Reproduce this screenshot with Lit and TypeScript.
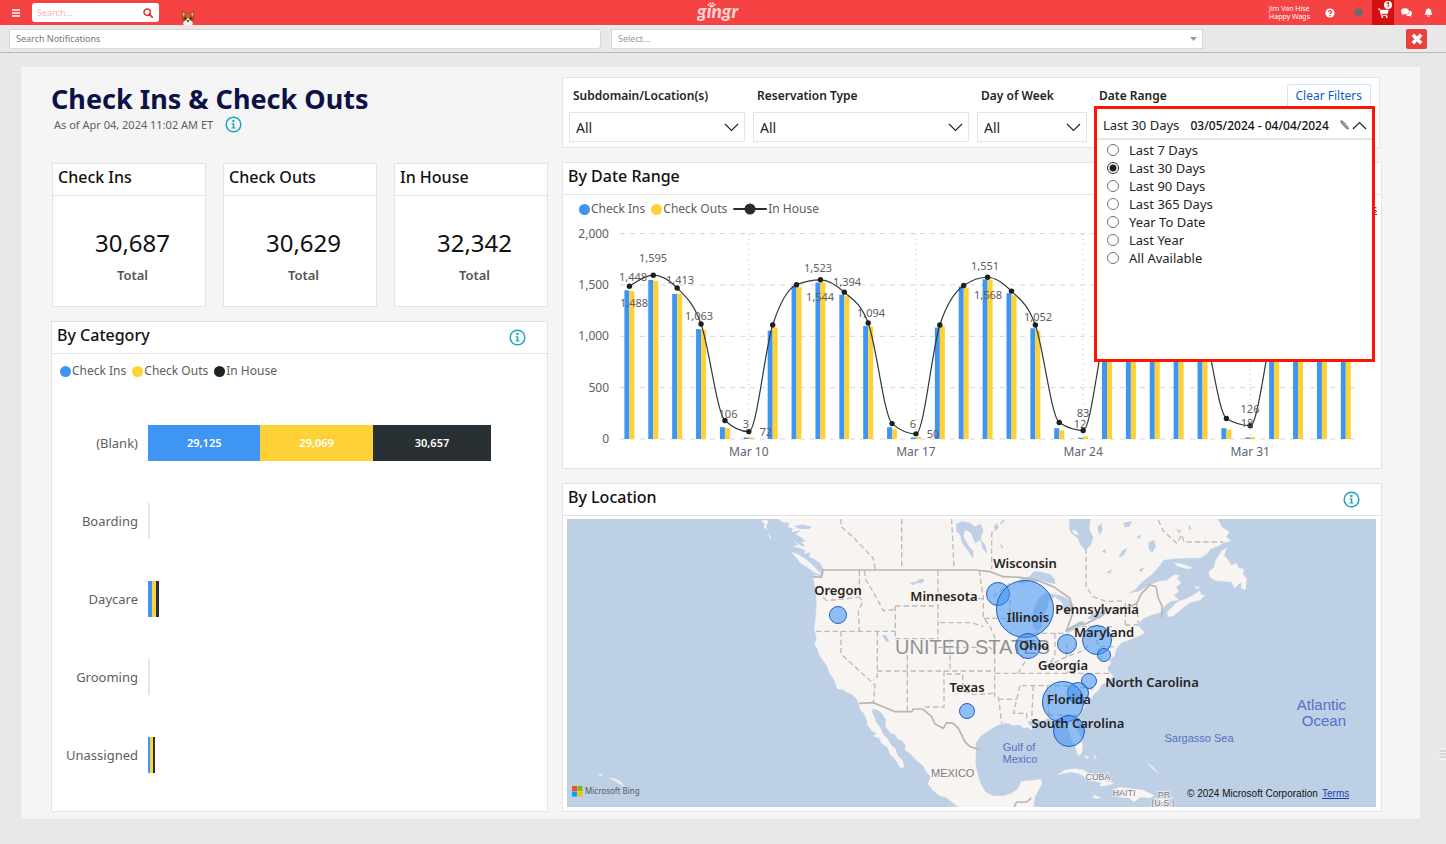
import { LitElement, html, svg, css } from "lit";
import { customElement, property, state } from "lit/decorators.js";

type Day = [number, number, number];

const DAYS: Day[] = [
  [1448, 1440, 1488], [1549, 1540, 1595], [1413, 1413, 1470], [1070, 1063, 1120],
  [115, 106, 180], [15, 17, 72], [1055, 1085, 1110], [1490, 1480, 1502],
  [1523, 1530, 1550], [1405, 1394, 1430], [1100, 1094, 1130], [115, 95, 150],
  [15, 20, 50], [1085, 1100, 1110], [1485, 1475, 1495], [1555, 1551, 1575],
  [1420, 1400, 1440], [1078, 1055, 1110], [105, 85, 160], [12, 25, 83],
  [1090, 1100, 1130], [1480, 1470, 1500], [1540, 1530, 1560], [1410, 1400, 1430],
  [1080, 1070, 1120], [105, 90, 200], [15, 18, 130], [1060, 1070, 1120],
  [1470, 1460, 1490], [1500, 1490, 1520], [1400, 1390, 1420],
];

const POINT_LABELS: [string, number, number][] = [
  ["1,448", 633, 281], ["1,595", 653, 262], ["1,413", 680, 284], ["1,488", 634, 307],
  ["1,063", 699, 320], ["106", 728, 418], ["3", 746, 428], ["72", 766, 436],
  ["1,523", 818, 272], ["1,544", 820, 301], ["1,394", 847, 286], ["1,094", 871, 317],
  ["6", 913, 428], ["50", 933, 438], ["1,551", 985, 270], ["1,568", 988, 299],
  ["1,052", 1038, 321], ["83", 1083, 417], ["12", 1080, 428], ["126", 1250, 413],
  ["18", 1247, 427],
];

const CATEGORIES: { name: string; values: number[] }[] = [
  { name: "(Blank)", values: [29125, 29069, 30657] },
  { name: "Boarding", values: [] },
  { name: "Daycare", values: [1000, 1000, 950] },
  { name: "Grooming", values: [] },
  { name: "Unassigned", values: [620, 620, 620] },
];
const CATEGORY_MAX = 103300;

const BUBBLES: [number, number, number][] = [
  [998, 594, 11], [1025, 609, 28], [1028, 646, 12], [1067, 644, 9], [1097, 640, 14],
  [1104, 655, 6], [1089, 681, 7], [1078, 693, 10], [1063, 702, 20], [1069, 731, 15],
  [838, 615, 8], [967, 711, 7],
];

const PLACES: [string, number, number][] = [
  ["Wisconsin", 1025, 568], ["Oregon", 838, 595], ["Minnesota", 944, 601],
  ["Illinois", 1028, 622], ["Pennsylvania", 1097, 614], ["Maryland", 1104, 637],
  ["Ohio", 1034, 650], ["Georgia", 1063, 670], ["Texas", 967, 692],
  ["North Carolina", 1152, 687], ["Florida", 1069, 704], ["South Carolina", 1078, 728],
];

const RANGES = ["Last 7 Days", "Last 30 Days", "Last 90 Days", "Last 365 Days", "Year To Date", "Last Year", "All Available"];

const FONT = css`"Noto Sans", "Open Sans", sans-serif`;

const xAt = (i: number) => 629.4 + i * 23.88;
const yAt = (v: number) => 439 - v * 0.1027;

/** Monotone cubic through the in-house points, so the curve never overshoots a day. */
function curve(points: [number, number][]): string {
  const n = points.length;
  const slope: number[] = [];
  for (let i = 0; i < n - 1; i++) {
    slope.push((points[i + 1][1] - points[i][1]) / (points[i + 1][0] - points[i][0]));
  }
  const tangent = points.map((_, i) => {
    if (i === 0) return slope[0] * 1.3;
    if (i === n - 1) return slope[n - 2];
    const a = slope[i - 1];
    const b = slope[i];
    if (a * b <= 0) return 0;
    return Math.sign(a) * Math.min(Math.abs(a), Math.abs(b), Math.abs(a + b) / 4) * 2;
  });
  let d = `M${points[0][0]},${points[0][1]}`;
  for (let i = 0; i < n - 1; i++) {
    const [x0, y0] = points[i];
    const [x1, y1] = points[i + 1];
    const h = (x1 - x0) / 3;
    d += `C${x0 + h},${y0 + tangent[i] * h} ${x1 - h},${y1 - tangent[i + 1] * h} ${x1},${y1}`;
  }
  return d;
}

@customElement("info-button")
class InfoButton extends LitElement {
  static styles = css`
    :host { display: inline-flex; }
    .info { display: flex; padding: 0; border: 0; background: none; }
  `;
  render() {
    return html`<button class="info" aria-label="Information">
      <svg width="17" height="17" viewBox="0 0 17 17">
        <circle cx="8.500" cy="8.500" r="7.300" fill="none" stroke="#1fa3bf" stroke-width="1.500" />
        <circle cx="8.400" cy="5" r="1.200" fill="#1fa3bf" />
        <path d="M6.500 7.200H9.300V11.400H10.600V12.500H6.400V11.400H7.700V8.300H6.500Z" fill="#1fa3bf" />
      </svg>
    </button>`;
  }
}

@customElement("chart-legend")
class ChartLegend extends LitElement {
  @property({ type: Boolean }) line = false;
  static styles = css`
    :host { display: block; }
    .legend { display: flex; gap: 6px; align-items: center; font: 12px/16px ${FONT}; color: #605e5c; }
    .item { display: flex; align-items: center; gap: 1px; }
    .dot { width: 11px; height: 11px; border-radius: 50%; }
    .ins { background: #3f95f4; }
    .outs { background: #fed236; }
    .house { background: #1d2426; }
  `;
  render() {
    return html`<div class="legend">
      <span class="item"><span class="dot ins"></span>Check Ins</span>
      <span class="item"><span class="dot outs"></span>Check Outs</span>
      <span class="item">${this.line
        ? html`<svg width="34" height="12" viewBox="0 0 34 12"><path d="M1 6H33" stroke="#262d30" stroke-width="2" stroke-linecap="round" /><circle cx="17" cy="6" r="5.500" fill="#262d30" /></svg>`
        : html`<span class="dot house"></span>`}In House</span>
    </div>`;
  }
}

@customElement("trend-chart")
class TrendChart extends LitElement {
  static styles = css`
    :host { display: block; }
    .chart { display: block; width: 100%; height: auto; font-family: ${FONT}; }
    .axis { font-size: 12px; fill: #605e5c; }
    .day { font-size: 12px; fill: #5b6570; text-anchor: middle; }
    .end { text-anchor: end; }
    .value { font-size: 11px; fill: #605e5c; text-anchor: middle; }
  `;
  render() {
    const points = DAYS.map(([, , h], i) => [xAt(i), yAt(h)] as [number, number]);
    return html`<svg class="chart" viewBox="562 224 820 244" role="img" aria-label="Check ins, check outs and in house by day">
      ${[0, 500, 1000, 1500, 2000].map(
        (v) => svg`<path d="M620,${yAt(v)}H1356" stroke="#d2d6da" stroke-width="1" stroke-dasharray="5 5" />
          <text class="axis end" x="609" y=${yAt(v) + 4}>${v.toLocaleString("en-US")}</text>`
      )}
      ${[5, 12, 19, 26].map(
        (i, k) => svg`<path d="M${xAt(i)},234V439" stroke="#bcc0c2" stroke-width="1" stroke-dasharray="1 4" />
          <text class="day" x=${xAt(i)} y="456">Mar ${10 + 7 * k}</text>`
      )}
      ${DAYS.map(
        ([a, b], i) => svg`<rect x=${xAt(i) - 5} y=${yAt(a)} width="5" height=${439 - yAt(a)} fill="#3f95f4" />
          <rect x=${xAt(i)} y=${yAt(b)} width="5" height=${439 - yAt(b)} fill="#fed236" />`
      )}
      <path d=${curve(points)} fill="none" stroke="#30383a" stroke-width="1.200" />
      ${points.map(([x, y]) => svg`<circle cx=${x} cy=${y} r="2.700" fill="#1a2022" />`)}
      ${POINT_LABELS.map(([t, x, y]) => svg`<text class="value" x=${x} y=${y}>${t}</text>`)}
    </svg>`;
  }
}

@customElement("location-map")
class LocationMap extends LitElement {
  static styles = css`
    :host { display: block; }
    .map { display: block; width: 100%; height: auto; font-family: ${FONT}; }
    .land { fill: #f8f4f2; stroke: #f8f4f2; stroke-width: 1; stroke-linejoin: round; }
    .lake { fill: #bdd0e5; }
    .state { fill: none; stroke: #bfbab8; stroke-width: 4; stroke-dasharray: 16 9; }
    .border { fill: none; stroke: #bab4b3; stroke-width: 5; }
    .sans { font-family: "Liberation Sans", sans-serif; }
    .country { font-size: 20px; fill: #929292; }
    .region { font-size: 11px; fill: #7c7c7c; }
    .small { font-size: 9px; fill: #7c7c7c; text-anchor: middle; }
    .sea { font-size: 11px; fill: #566fc4; text-anchor: middle; }
    .ocean { font-size: 15px; fill: #566fc4; text-anchor: end; }
    .bubble { fill: #3b8ff5; fill-opacity: 0.55; stroke: #1b62c4; stroke-width: 1; }
    .place { font-size: 13px; font-weight: 600; fill: #252423; text-anchor: middle; }
    .halo { paint-order: stroke; stroke: #f8f4f2; stroke-opacity: 0.7; stroke-width: 2px; }
    .bing { font-size: 8px; fill: #555a5e; }
    .notice { font-size: 10px; fill: #111; }
    .terms { font-size: 10px; fill: #1f3fa8; text-decoration: underline; }
  `;
  render() {
    return html`<svg class="map" viewBox="567 519 809 288" role="img" aria-label="Check ins by location">
      <rect x="567" y="519" width="809" height="288" fill="#bdd0e5" />
      <g transform="translate(560 480) scale(0.33333)">
        <path class="land" d="M655,117 668,126 690,128 684,140 700,146 692,158 712,164 722,176 702,184 716,194 700,200 722,204 738,212 732,222 752,216 748,230 762,236 782,250 790,266 792,280 784,292 772,286 758,288 764,312 768,340 770,375 766,425 763,440 766,460 770,475 764,492 774,510 778,525 790,542 800,556 810,582 822,598 832,627 848,628 860,636 874,642 888,654 896,670 902,690 912,700 922,724 922,734 936,752 950,762 940,768 958,774 964,788 984,804 990,822 1006,838 1022,864 1033,860 1026,840 1014,828 1006,806 990,792 984,778 970,764 960,742 948,726 942,708 934,694 938,686 954,690 968,702 978,720 976,738 990,758 1006,764 1012,776 1028,784 1038,798 1034,808 1052,822 1070,842 1090,858 1100,876 1112,890 1104,912 1122,934 1140,948 1158,952 1176,966 1196,982 1420,982 1424,952 1434,932 1446,912 1443,898 1412,902 1384,904 1376,924 1356,940 1330,948 1300,948 1276,936 1262,912 1252,880 1246,850 1248,812 1246,792 1260,770 1282,754 1308,738 1330,730 1346,730 1360,736 1380,734 1390,744 1404,742 1412,750 1422,742 1406,734 1402,724 1430,720 1450,722 1464,714 1484,718 1500,728 1514,736 1528,750 1534,776 1546,800 1554,826 1564,822 1568,800 1562,772 1550,746 1548,722 1560,700 1576,680 1590,660 1602,642 1614,632 1624,614 1642,606 1660,588 1646,576 1642,562 1654,548 1646,540 1664,528 1668,508 1684,488 1708,480 1740,466 1754,458 1742,446 1734,432 1748,416 1776,404 1802,396 1816,376 1832,364 1856,360 1842,346 1856,334 1848,322 1864,308 1852,298 1858,286 1842,284 1820,302 1800,304 1770,314 1738,334 1700,342 1726,328 1746,306 1776,282 1798,258 1810,240 1840,236 1880,234 1920,234 1940,222 1952,206 1974,198 1990,188 2012,182 1998,170 2008,156 1986,142 1976,122 1970,117Z" />
        <path class="land" d="M1825,410 1822,396 1838,380 1852,366 1880,356 1902,344 1920,332 1922,344 1934,346 1920,360 1890,368 1870,382 1852,398 1838,408Z" />
        <path class="land" d="M1950,292 1946,276 1962,262 1968,240 1986,212 2000,204 1992,226 2004,240 2014,256 2030,250 2036,264 2052,268 2048,282 2060,296 2056,330 2044,324 2044,306 2024,324 2014,306 1990,304 1968,302Z" />
        <path class="land" d="M694,216 712,222 740,240 764,262 786,284 768,280 742,262 722,250 712,236Z" />
        <path class="land" d="M604,122 620,120 626,128 618,134 620,148 612,142 614,132ZM626,160 634,176 630,176Z" />
        <path class="land" d="M1492,884 1516,870 1546,866 1570,870 1590,882 1620,892 1662,910 1636,918 1618,918 1624,908 1588,900 1560,882 1534,876 1516,880Z" />
        <path class="land" d="M1662,928 1680,922 1716,926 1748,930 1782,946 1770,954 1740,952 1722,966 1708,954 1668,950 1692,946 1686,934ZM1794,956 1826,956 1822,966 1796,966ZM1600,946 1622,952 1612,956 1598,952Z" />
        <path class="land" d="M1842,248 1866,252 1900,264 1880,266 1852,258ZM1902,318 1920,322 1912,328ZM1762,850 1774,858 1796,878 1780,868ZM1572,826 1588,832 1580,836ZM1602,824 1610,838 1604,836Z" />
        <path class="land" d="M114,884 126,882 124,888ZM146,894 162,896 180,904 196,922 184,914 168,904Z" />

        <path class="lake" d="M1528,117H1592L1588,148 1600,172 1592,196 1576,210 1562,196 1552,174 1536,162 1528,150Z" />
        <path class="land" d="M1536,150 1548,152 1556,164 1544,162Z" />
        <path class="lake" d="M1370,306 1386,296 1410,288 1422,274 1444,276 1470,282 1484,298 1486,312 1466,308 1440,300 1424,308 1404,304 1388,312Z" />
        <path class="lake" d="M1420,446 1416,416 1424,378 1436,356 1456,338 1500,346 1532,360 1542,378 1530,396 1512,392 1506,366 1484,350 1466,362 1462,384 1448,412 1446,440 1434,452Z" />
        <path class="lake" d="M1514,452 1532,440 1560,424 1574,424 1570,436 1544,450 1520,460ZM1582,414 1600,400 1636,390 1640,400 1616,416 1588,418Z" />
        <path class="lake" d="M1188,132 1206,124 1230,128 1244,140 1262,132 1270,150 1262,176 1276,196 1282,222 1268,206 1262,180 1246,190 1232,158 1216,150 1210,168 1226,198 1240,214 1240,236 1226,216 1206,188 1200,164 1190,156Z" />
        <path class="lake" d="M1048,308 1068,306 1078,298 1094,298 1086,310 1070,310 1060,316ZM966,464 978,466 988,484 978,486Z" />
        <path class="lake" d="M676,150 700,156 722,150 706,164 724,172 738,186 724,184 736,202 720,196 704,182 688,168ZM700,138 728,134 756,140 746,148 720,146Z" />
        <path class="lake" d="M1676,232 1686,212 1702,204 1694,222 1682,232ZM1736,270 1752,262 1746,276ZM1766,186 1782,180 1788,200 1776,218 1766,206ZM1612,142 1624,130 1628,150 1618,166ZM1690,128 1716,124 1708,140 1694,142ZM1640,276 1656,268 1650,282ZM1626,216 1634,206 1640,220ZM1730,170 1742,164 1740,178ZM1850,146 1866,154 1856,160ZM1888,134 1896,150 1884,146ZM1320,190 1330,200 1324,206ZM1300,140 1310,128 1314,150ZM1420,260 1436,256 1430,268Z" />

        <path class="state" d="M843,117V140L880,172 940,235 945,268M1025,117V268M1175,117 1182,268M898,272V352L908,365 895,395 898,452M913,272 918,300 945,345 970,392 1006,388M1006,378V476M1006,378H1134M1134,272V476M790,352 800,362 895,352M768,454H1006M843,454V522L945,615 940,668M952,454V590L940,600M952,573H1305M1006,476H1134M1042,476V692M1140,428H1236L1270,440M1134,502H1290L1305,520M1170,476V573M1152,573V681H1088M1160,582H1208V630L1240,644 1305,640" />
        <path class="state" d="M1332,120 1295,160V268M1578,205V320L1600,350 1640,365 1696,362M1258,272 1268,345M1230,356H1268M1270,345V412L1290,440 1304,470V650M1272,415H1420M1305,580H1650M1315,658H1370M1315,650 1325,730M1385,617H1520L1600,628M1420,617 1415,720M1462,617 1466,718M1466,705H1550M1380,617 1360,700H1400V720M1374,580 1395,545 1370,500M1485,460V530L1460,560M1420,460H1520M1565,440H1665M1460,560 1520,530 1570,512 1590,490M1696,370V430L1700,445M1730,370 1735,430M1695,435H1745M1795,120 1808,150 1850,190 1866,165 1872,186H1990M1520,617 1560,660 1578,678M1620,500H1664M1520,530V490M1560,540 1520,580M1610,480 1625,540M1350,360V410M1300,350 1350,310" />
        <path class="border" d="M757,290 785,292 788,270H1245L1290,275 1330,290 1380,292 1430,300 1480,320 1530,355 1538,400 1520,450 1560,430 1575,433 1630,405 1636,386 1700,385 1730,370 1745,340 1770,315 1788,320 1795,355 1807,380 1805,415" />
        <path class="border" d="M897,670 940,668 1005,695H1055L1060,687H1088L1115,710 1125,732 1150,745 1160,728 1180,730 1195,745 1215,785 1230,800 1258,808M1362,982 1370,966H1400L1414,954" />
      </g>
      <text class="sans country halo" x="895" y="654">UNITED STATES</text>
      <text class="sans region halo" x="931" y="777">MEXICO</text>
      <text class="sans small halo" x="1098" y="780">CUBA</text>
      <text class="sans small halo" x="1124" y="796">HAITI</text>
      <text class="sans small halo" x="1164" y="798">PR</text>
      <text class="sans small halo" x="1163" y="806">(U.S.)</text>
      <text class="sans sea" x="1019" y="751">Gulf of</text>
      <text class="sans sea" x="1020" y="763">Mexico</text>
      <text class="sans sea" x="1199" y="742">Sargasso Sea</text>
      <text class="sans ocean" x="1346" y="710">Atlantic</text>
      <text class="sans ocean" x="1346" y="726">Ocean</text>
      ${BUBBLES.map(([x, y, r]) => svg`<circle class="bubble" cx=${x} cy=${y} r=${r + 0.5} />`)}
      ${PLACES.map(([t, x, y]) => svg`<text class="place" x=${x} y=${y}>${t}</text>`)}
      <rect x="572" y="786" width="5" height="5" fill="#f25022" /><rect x="577.500" y="786" width="5" height="5" fill="#7fba00" />
      <rect x="572" y="791.500" width="5" height="5" fill="#00a4ef" /><rect x="577.500" y="791.500" width="5" height="5" fill="#ffb900" />
      <text class="bing" x="585" y="794">Microsoft Bing</text>
      <text class="sans notice" x="1187" y="797">© 2024 Microsoft Corporation</text>
      <a href="#terms"><text class="sans terms" x="1322" y="797">Terms</text></a>
    </svg>`;
  }
}

@customElement("app-root")
class AppRoot extends LitElement {
  @state() private range = "Last 30 Days";

  static styles = css`
    :host { display: flex; flex-direction: column; min-height: 100vh; background: #e8e8e8; color: #252423; font: 12px/16px ${FONT}; }
    * { box-sizing: border-box; }
    button, input, select { font-family: inherit; margin: 0; }
    button { padding: 0; border: 0; background: none; }
    h1, h2, p, fieldset { margin: 0; padding: 0; border: 0; }

    .topbar { display: grid; grid-template-columns: 1fr auto 1fr; align-items: center; height: 25px; padding-right: 8px; background: #f54343; color: #fff; }
    .left { display: flex; align-items: center; height: 25px; }
    .menu { display: flex; justify-content: center; width: 32px; }
    .search { display: flex; align-items: center; width: 127px; height: 19px; padding: 0 6px 0 5px; border-radius: 3px; background: #fff; }
    .search-input { flex: 1; min-width: 0; border: 0; padding: 0; outline: 0; background: none; font-size: 9px; }
    .search-input::placeholder { color: #f6b3b3; }
    .mascot { align-self: flex-end; margin-left: 21px; }
    .brand { display: flex; }
    .brand-text { font: italic 900 19px/20px Lato, sans-serif; fill: #fdd3d3; }
    .right { display: flex; justify-content: flex-end; align-items: center; height: 25px; }
    .account { margin-right: 6px; font-size: 7px; line-height: 8px; }
    .icon { display: flex; justify-content: center; align-items: center; width: 28px; height: 25px; }
    .chat { width: 24px; }
    .bell { width: 20px; }
    .cart { position: relative; width: 22px; background: #d31111; }
    .badge { position: absolute; top: 1px; right: 2px; width: 8px; height: 8px; border-radius: 50%; background: #fff; color: #c11; font-size: 7px; line-height: 8px; font-weight: 700; }

    .subbar { display: grid; grid-template-columns: 592fr 592fr 214fr; gap: 10px; align-items: center; height: 28px; padding: 0 19px 0 9px; border-bottom: 1px solid #b9b9b9; }
    .notify { height: 20px; border: 1px solid #d9d9d9; border-radius: 3px; padding: 0 6px; font-size: 9px; color: #777; background: #fff; }
    .notify::placeholder { color: #777; }
    .pick { display: grid; align-items: center; }
    .pick-select { grid-area: 1 / 1; width: 100%; height: 20px; appearance: none; border: 1px solid #d9d9d9; padding: 0 6px; font-size: 9px; color: #999; background: #fff; }
    .pick-arrow { grid-area: 1 / 1; justify-self: end; margin-right: 6px; pointer-events: none; }
    .close { display: flex; justify-self: end; align-items: center; justify-content: center; width: 21px; height: 20px; border-radius: 2px; background: #e9413e; }

    .stage { position: relative; flex: 1; padding: 14px 26px 25px 21px; }
    .report { display: grid; grid-template-columns: 497fr 820fr; gap: 14px; padding: 10px 38px 7px 30px; background: #f5f5f5; }
    .column { display: flex; flex-direction: column; min-width: 0; gap: 14px; }
    .intro { height: 72px; padding-top: 5px; }
    .title { font-size: 27px; line-height: 34px; font-weight: 700; color: #0c1245; }
    .asof { display: flex; align-items: center; gap: 12px; padding-left: 3px; font-size: 11px; line-height: 16px; color: #605e5c; }

    .panel { background: #fff; border: 1px solid #e4e4e4; }
    .grow { flex: 1; }
    .head { display: flex; justify-content: space-between; align-items: center; height: 32px; padding: 0 21px 5px 5px; border-bottom: 1px solid #e4e4e4; }
    .heading { font-size: 16px; line-height: 22px; font-weight: 500; color: #111; }
    .head-info { padding-top: 4px; }

    .stats { display: grid; grid-template-columns: repeat(3, 1fr); gap: 17px; padding-left: 1px; }
    .stat { height: 144px; text-align: center; }
    .stat-body { padding: 31px 0 0 7px; }
    .number { font-size: 24px; line-height: 32px; color: #111; }
    .total { padding-top: 7px; font-size: 13px; line-height: 18px; font-weight: 600; color: #555; }

    .category-legend { padding: 9px 8px 0; }
    .rows { padding-top: 25px; }
    .row { display: grid; grid-template-columns: 86px 1fr; gap: 10px; align-items: center; height: 78px; font-size: 13px; color: #605e5c; }
    .row-name { text-align: right; }
    .track { display: flex; height: 36px; }
    .empty { width: 2px; background: #e6e6e6; }
    .seg { display: flex; align-items: center; justify-content: center; overflow: hidden; color: #fff; font-size: 11px; font-weight: 600; }
    .seg-0 { background: #3f95f4; }
    .seg-1 { background: #fed236; }
    .seg-2 { background: #293033; }

    .filters { position: relative; display: grid; grid-template-columns: 176fr 216fr 110fr 276fr; gap: 8px; height: 71px; padding: 6px 8px 0 6px; margin-right: 2px; }
    .filter { display: flex; flex-direction: column; gap: 4px; }
    .filter-label { padding-left: 4px; font-size: 12px; line-height: 24px; font-weight: 600; color: #252423; }
    .drop { display: grid; align-items: center; }
    .drop-select { grid-area: 1 / 1; width: 100%; height: 30px; padding: 0 6px; appearance: none; border: 1px solid #e6e6e6; border-radius: 0; background: #fff; font-size: 14px; color: #252423; }
    .drop-arrow { grid-area: 1 / 1; justify-self: end; margin-right: 6px; pointer-events: none; }
    .date-head { display: flex; justify-content: space-between; height: 24px; }
    .clear { height: 24px; padding: 0 8px; border: 1px solid #cfe5fa; border-radius: 2px; background: #fff; font-size: 12px; line-height: 22px; color: #0f5bc4; }

    .popup { position: absolute; z-index: 2; top: 28px; right: 4px; width: 281px; height: 256px; border: 3px solid #fb1505; background: #fff; }
    .current { display: flex; align-items: center; justify-content: space-between; width: 100%; height: 31px; padding: 3px 5px 0 6px; border-bottom: 2px solid #e4e4e4; font-size: 13px; color: #252423; }
    .span { font-size: 12px; font-weight: 500; color: #111; }
    .tools { display: flex; align-items: center; gap: 3px; }
    .options { display: flex; flex-direction: column; padding: 1px 0 0 10px; }
    .option { display: flex; align-items: center; gap: 10px; height: 18px; font-size: 13px; }
    .radio { appearance: none; width: 12px; height: 12px; border: 1px solid #777; border-radius: 50%; background: #fff; }
    .radio:checked { border-color: #333; background: radial-gradient(circle, #222 0 3px, #fff 4px); }

    .trend-legend { display: flex; justify-content: space-between; padding: 6px 4px 7px 16px; }
    .more { font-size: 11px; line-height: 16px; color: #0f5bc4; }
    .bleed { margin: 0 -1px; }
    .map-wrap { padding: 3px 5px 4px 4px; }
    .edge { position: absolute; right: 0; top: 695px; width: 8px; height: 12px; border-radius: 2px 0 0 2px; background: #f1f1f1; }
  `;

  private dropdown(label: string, id: string) {
    return html`<div class="filter">
      <label class="filter-label" for=${id}>${label}</label>
      <div class="drop">
        <select class="drop-select" id=${id}><option>All</option></select>
        <svg class="drop-arrow" width="15" height="9" viewBox="0 0 15 9"><path d="M1 1L7.500 7.500L14 1" fill="none" stroke="#252423" stroke-width="1.200" /></svg>
      </div>
    </div>`;
  }

  private stat(name: string, value: string) {
    return html`<section class="panel stat">
      <div class="head"><h2 class="heading">${name}</h2></div>
      <div class="stat-body"><p class="number">${value}</p><p class="total">Total</p></div>
    </section>`;
  }

  render() {
    return html`
      <header class="topbar">
        <div class="left">
          <button class="menu" aria-label="Menu"><svg width="8" height="8" viewBox="0 0 8 8"><path d="M0 1H8M0 4H8M0 7H8" stroke="#fff" stroke-width="1.400" /></svg></button>
          <label class="search">
            <input class="search-input" type="search" placeholder="Search..." aria-label="Search" />
            <svg width="10" height="10" viewBox="0 0 10 10"><circle cx="4.200" cy="4.200" r="3.200" fill="none" stroke="#e2322f" stroke-width="1.500" /><path d="M6.500 6.500L9.200 9.200" stroke="#e2322f" stroke-width="1.800" stroke-linecap="round" /></svg>
          </label>
          <svg class="mascot" width="16" height="16" viewBox="0 0 16 16">
            <path d="M2 1L6 4.500H10L14 1L14.300 8L12.500 16H3.500L1.700 8Z" fill="#a8501c" />
            <path d="M2.800 3L5 5L3 8ZM13.200 3L11 5L13 8Z" fill="#f0b48c" />
            <path d="M5 5H11L9.500 10H6.500Z" fill="#c4672a" />
            <path d="M3.200 13L6 11L7 9.500H9L10 11L12.800 13L12.500 16H3.500Z" fill="#f3eee8" />
            <circle cx="5.500" cy="9.500" r="1" fill="#1b1411" /><circle cx="10.500" cy="9.500" r="1" fill="#1b1411" />
            <path d="M6.400 11.300H9.600L8 13.300Z" fill="#1b1411" />
          </svg>
        </div>
        <div class="brand"><svg width="44" height="25" viewBox="0 0 44 25" role="img" aria-label="gingr">
          <text class="brand-text" x="0" y="18">gıngr</text>
          <ellipse cx="14.500" cy="6" rx="2.200" ry="1.600" fill="#fdd3d3" /><circle cx="11.500" cy="4.800" r="1" fill="#fdd3d3" /><circle cx="13.400" cy="3.200" r="1" fill="#fdd3d3" /><circle cx="15.800" cy="3.200" r="1" fill="#fdd3d3" /><circle cx="17.600" cy="4.800" r="1" fill="#fdd3d3" />
        </svg></div>
        <div class="right">
          <div class="account">Jim Van Hise<br />Happy Wags</div>
          <button class="icon help" aria-label="Help"><svg width="10" height="10" viewBox="0 0 10 10"><circle cx="5" cy="5" r="4.600" fill="#fff" /><path d="M3.500 4C3.500 2 6.600 2.100 6.500 3.900C6.400 4.900 5 4.900 5 6" fill="none" stroke="#f54343" stroke-width="1.300" /><circle cx="5" cy="7.500" r="0.800" fill="#f54343" /></svg></button>
          <button class="icon" aria-label="Status"><svg width="9" height="9" viewBox="0 0 9 9"><circle cx="4.500" cy="4.500" r="4.300" fill="#6f6a6a" /></svg></button>
          <button class="icon cart" aria-label="Cart, 1 item">
            <svg width="11" height="10" viewBox="0 0 11 10"><path d="M0 0.500H2L2.400 1.800H10.800L9.700 5.800H3.600L3.800 6.700H9.400V7.700H3L1.400 1.500H0Z" fill="#fff" /><circle cx="4.200" cy="8.900" r="1" fill="#fff" /><circle cx="8.700" cy="8.900" r="1" fill="#fff" /></svg>
            <span class="badge">1</span>
          </button>
          <button class="icon chat" aria-label="Messages"><svg width="11" height="9" viewBox="0 0 11 9"><ellipse cx="4" cy="3.200" rx="3.900" ry="3" fill="#fff" /><path d="M0.600 7L1.400 4.500L3.500 6Z" fill="#fff" /><path d="M8.400 2.600C11.500 3.200 11.600 6 10 7.200L10.700 8.800L8.600 8C6.500 8.300 5 7.500 4.600 6.800C7 6.500 8.700 5 8.400 2.600Z" fill="#fff" /></svg></button>
          <button class="icon bell" aria-label="Alerts"><svg width="9" height="9" viewBox="0 0 9 9"><path d="M4.500 0C5 0 5.100 0.300 5.100 0.700C6.800 1 7.300 2.300 7.300 3.800C7.300 5.500 8 6 8.600 6.800H0.400C1 6 1.700 5.500 1.700 3.800C1.700 2.300 2.200 1 3.900 0.700C3.900 0.300 4 0 4.500 0ZM3.300 7.400H5.700C5.600 9.300 3.400 9.300 3.300 7.400Z" fill="#fff" /></svg></button>
        </div>
      </header>

      <div class="subbar">
        <input class="notify" type="text" placeholder="Search Notifications" aria-label="Search Notifications" />
        <div class="pick">
          <select class="pick-select" aria-label="Select"><option>Select...</option></select>
          <svg class="pick-arrow" width="7" height="4" viewBox="0 0 7 4"><path d="M0 0H7L3.500 4Z" fill="#999" /></svg>
        </div>
        <button class="close" aria-label="Close"><svg width="12" height="12" viewBox="0 0 12 12"><path d="M1.800 1.800L10.200 10.200M10.200 1.800L1.800 10.200" stroke="#fff" stroke-width="3.600" /></svg></button>
      </div>

      <main class="stage">
        <div class="report">
          <div class="column">
            <div class="intro">
              <h1 class="title">Check Ins &amp; Check Outs</h1>
              <div class="asof">As of Apr 04, 2024 11:02 AM ET <info-button></info-button></div>
            </div>
            <div class="stats">
              ${this.stat("Check Ins", "30,687")} ${this.stat("Check Outs", "30,629")} ${this.stat("In House", "32,342")}
            </div>
            <section class="panel grow">
              <div class="head"><h2 class="heading">By Category</h2><info-button class="head-info"></info-button></div>
              <chart-legend class="category-legend"></chart-legend>
              <div class="rows">
                ${CATEGORIES.map(
                  (c) => html`<div class="row">
                    <span class="row-name">${c.name}</span>
                    <div class="track">
                      ${c.values.length
                        ? c.values.map(
                            (v, i) => html`<div class="seg seg-${i}" style="width:${(v / CATEGORY_MAX) * 100}%">${v > 5000 ? v.toLocaleString("en-US") : ""}</div>`
                          )
                        : html`<div class="empty"></div>`}
                    </div>
                  </div>`
                )}
              </div>
            </section>
          </div>

          <div class="column">
            <section class="panel filters">
              ${this.dropdown("Subdomain/Location(s)", "location")}
              ${this.dropdown("Reservation Type", "type")}
              ${this.dropdown("Day of Week", "weekday")}
              <div class="date-head">
                <span class="filter-label">Date Range</span>
                <button class="clear">Clear Filters</button>
              </div>
              <div class="popup">
                <button class="current">
                  <span>${this.range}</span>
                  <span class="span">03/05/2024 - 04/04/2024</span>
                  <span class="tools">
                    <svg width="9" height="10" viewBox="0 0 9 10"><path d="M0.800 0.800L3 1.200L8 7L8.300 9.200L6 8.200L1 2.800Z" fill="#bbb" stroke="#666" stroke-width="0.800" /><path d="M2 2L7 8" stroke="#666" stroke-width="0.700" /></svg>
                    <svg width="15" height="9" viewBox="0 0 15 9"><path d="M1 8L7.500 1.500L14 8" fill="none" stroke="#252423" stroke-width="1.200" /></svg>
                  </span>
                </button>
                <fieldset class="options" aria-label="Date Range">
                  ${RANGES.map(
                    (r) => html`<label class="option"><input class="radio" type="radio" name="range" .checked=${r === this.range} @change=${() => (this.range = r)} />${r}</label>`
                  )}
                </fieldset>
              </div>
            </section>

            <section class="panel">
              <div class="head"><h2 class="heading">By Date Range</h2></div>
              <div class="trend-legend"><chart-legend line></chart-legend><a class="more" href="#more">s</a></div>
              <trend-chart class="bleed"></trend-chart>
            </section>

            <section class="panel">
              <div class="head"><h2 class="heading">By Location</h2><info-button class="head-info"></info-button></div>
              <div class="map-wrap"><location-map></location-map></div>
            </section>
          </div>
        </div>
        <div class="edge"><svg width="8" height="12" viewBox="0 0 8 12"><path d="M1 3H8M1 6H8M1 9H8" stroke="#bdbdbd" /></svg></div>
      </main>
    `;
  }
}
